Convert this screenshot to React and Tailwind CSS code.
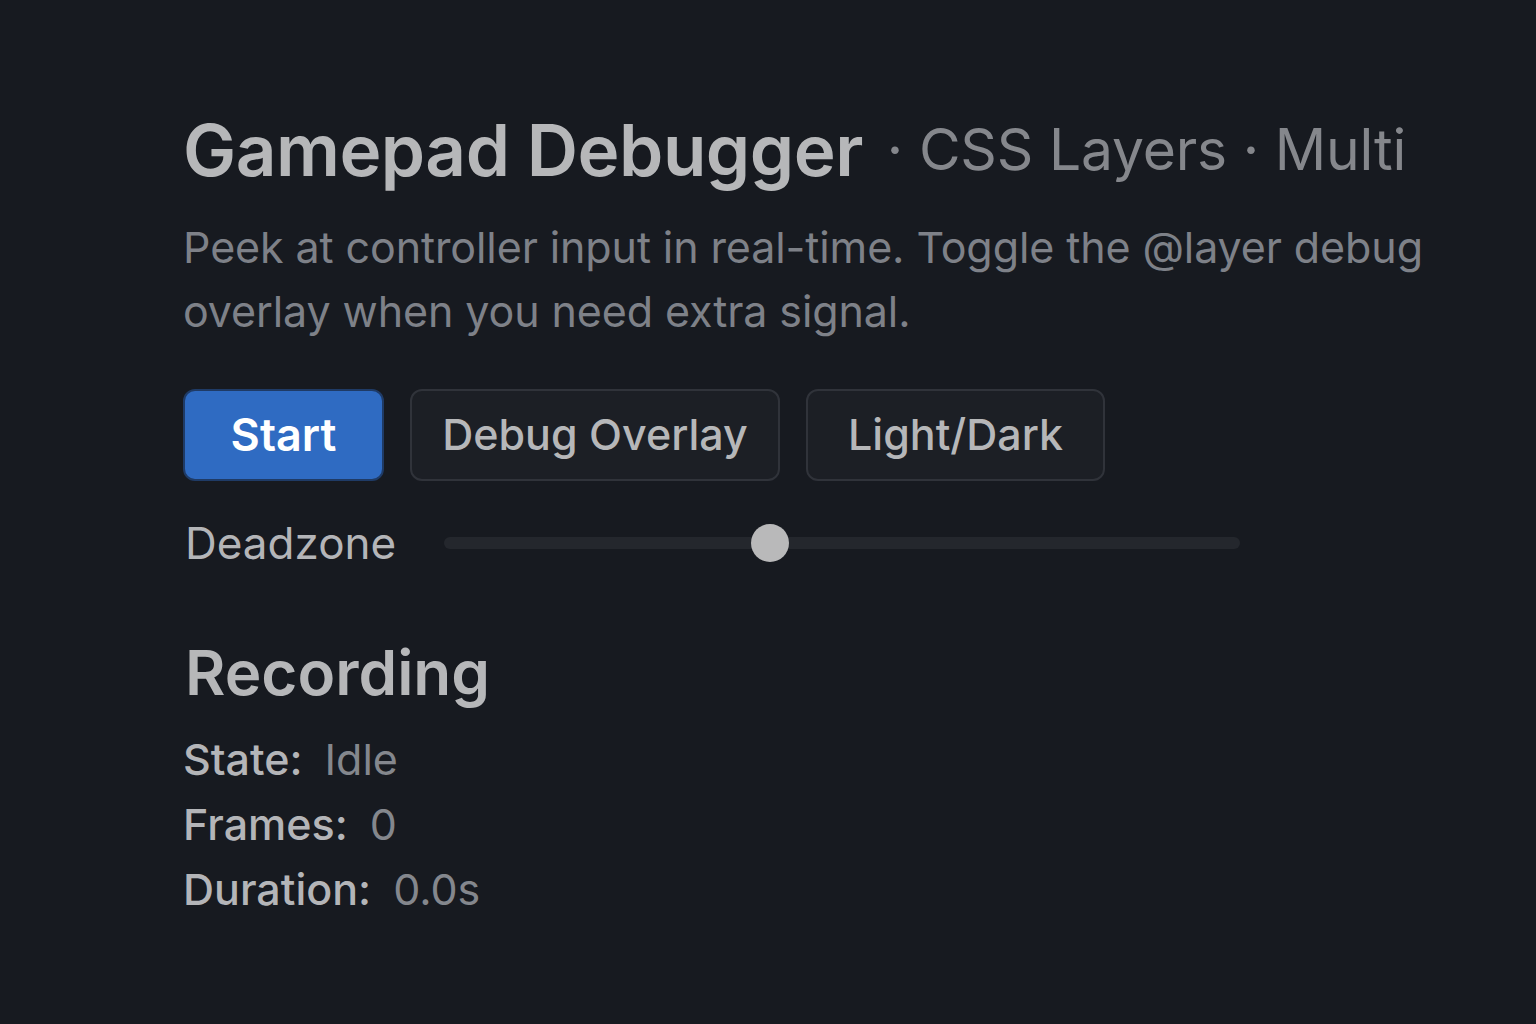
import React, { useState } from 'react';

// Gamepad debugger panel: header, controls, deadzone slider, recording stats
function StatRow({ label, value }) {
  return (
    <div className="flex items-baseline h-[65px]">
      <span className="text-[#b4b5b8] font-medium">{label}:</span>
      <span className="ml-[22px] text-[#84878d]">{value}</span>
    </div>
  );
}

export default function App() {
  const [deadzone] = useState(0.41);

  return (
    <div
      className="min-h-[1024px] w-full bg-[#171a20] text-[#b4b5b8]"
      style={{ fontFamily: 'Inter, "Noto Sans", sans-serif' }}
    >
      <div className="pl-[183px] pt-[107px]">
        {/* Header */}
        <div className="flex items-center whitespace-nowrap">
          <h1 className="text-[71px] leading-[78px] font-semibold tracking-[-0.5px] text-[#b6b7b9]">
            Gamepad Debugger
          </h1>
          <span className="ml-[24px] text-[57px] text-[#85878c] tracking-[-0.2px]">
            · CSS Layers · Multi
          </span>
        </div>

        <p className="mt-[22px] w-[1320px] text-[43px] leading-[64px] tracking-[-0.1px] text-[#7e8188]">
          Peek at controller input in real-time. Toggle the @layer debug overlay when you need extra signal.
        </p>

        {/* Controls */}
        <div className="mt-[46px] flex gap-[26px]">
          <button className="h-[92px] w-[201px] rounded-[12px] border-2 border-[#1f3b66] bg-[#2f6bc2] text-[45px] font-semibold text-white">
            Start
          </button>
          <button className="h-[92px] w-[370px] rounded-[12px] border-2 border-[#30333a] bg-[#1c1f25] text-[43px] font-medium text-[#b6b7b9]">
            Debug Overlay
          </button>
          <button className="h-[92px] w-[299px] rounded-[12px] border-2 border-[#30333a] bg-[#1c1f25] text-[43px] font-medium text-[#b6b7b9]">
            Light/Dark
          </button>
        </div>

        {/* Deadzone slider */}
        <div className="mt-[30px] flex items-center h-[64px]">
          <span className="w-[261px] pl-[2px] text-[44px] text-[#b4b5b8]">Deadzone</span>
          <div className="relative h-[12px] w-[796px] rounded-full bg-[#24272d]">
            <div
              className="absolute top-1/2 h-[38px] w-[38px] -translate-x-1/2 -translate-y-1/2 rounded-full bg-[#b9b9ba]"
              style={{ left: `${deadzone * 100}%` }}
            />
          </div>
        </div>

        {/* Recording */}
        <h2 className="mt-[62px] pl-[2px] text-[62px] leading-[72px] font-semibold text-[#b6b7b9]">
          Recording
        </h2>
        <div className="mt-[18px] text-[43px] leading-[65px]">
          <StatRow label="State" value="Idle" />
          <StatRow label="Frames" value="0" />
          <StatRow label="Duration" value="0.0s" />
        </div>
      </div>
    </div>
  );
}
